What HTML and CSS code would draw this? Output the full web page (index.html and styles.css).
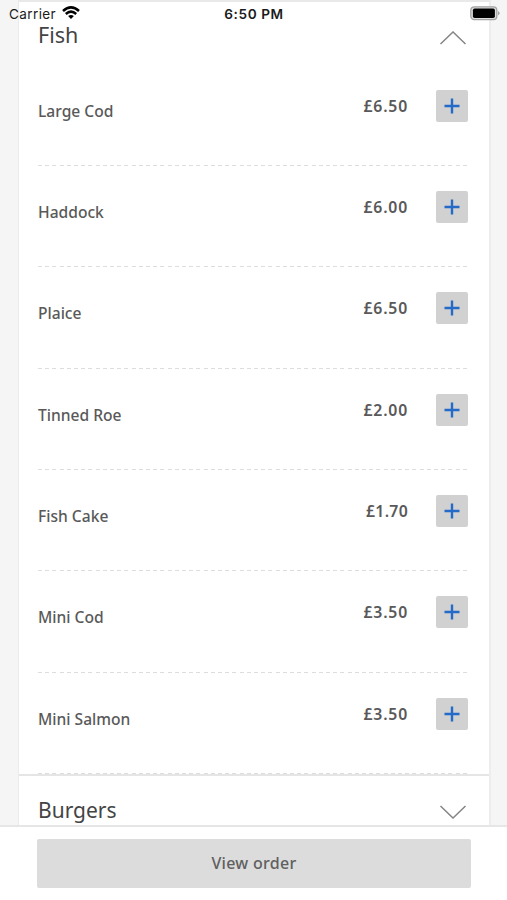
FILE: index.html
```html
<!DOCTYPE html>
<html lang="en">
<head>
<meta charset="utf-8">
<title>Menu</title>
<link rel="stylesheet" href="styles.css">
</head>
<body>
<div class="screen">
  <div class="status">
    <span class="carrier">Carrier</span>
    <svg class="wifi" viewBox="0 0 18 13" width="18" height="13"><g fill="none" stroke="#000" stroke-width="2.5"><path d="M1 5Q9-2.2 17 5"/><path d="M3.8 8Q9 3.3 14.2 8"/></g><path d="M9 13L6.1 10.1Q9 7.8 11.9 10.1Z"/></svg>
    <span class="time">6:50 PM</span>
    <svg class="battery" viewBox="0 0 31 15" width="31" height="15"><rect x=".8" y=".8" width="26" height="12.8" rx="3.4" fill="#ddd" stroke="#a3a3a3" stroke-width="1.3"/><rect x="2.9" y="2.4" width="22" height="9.6" rx="1.8"/><path d="M28 5Q31.2 7.2 28 9.4Z" fill="#a3a3a3"/></svg>
  </div>
  <main class="menu">
    <section class="section">
      <header class="heading fish"><h2>Fish</h2><svg class="chevron" viewBox="0 0 28 14" width="28" height="14"><path d="M1.5 13L14 1L26.5 13"/></svg></header>
      <ul class="items">
        <li class="item"><span class="name">Large Cod</span><span class="price">£6.50</span><button class="add" aria-label="Add"><svg viewBox="0 0 16 16" width="16" height="16"><path d="M8 .5V15.5M.5 8H15.5"/></svg></button></li>
        <li class="item"><span class="name">Haddock</span><span class="price">£6.00</span><button class="add" aria-label="Add"><svg viewBox="0 0 16 16" width="16" height="16"><path d="M8 .5V15.5M.5 8H15.5"/></svg></button></li>
        <li class="item"><span class="name">Plaice</span><span class="price">£6.50</span><button class="add" aria-label="Add"><svg viewBox="0 0 16 16" width="16" height="16"><path d="M8 .5V15.5M.5 8H15.5"/></svg></button></li>
        <li class="item"><span class="name">Tinned Roe</span><span class="price">£2.00</span><button class="add" aria-label="Add"><svg viewBox="0 0 16 16" width="16" height="16"><path d="M8 .5V15.5M.5 8H15.5"/></svg></button></li>
        <li class="item"><span class="name">Fish Cake</span><span class="price narrow">£1.70</span><button class="add" aria-label="Add"><svg viewBox="0 0 16 16" width="16" height="16"><path d="M8 .5V15.5M.5 8H15.5"/></svg></button></li>
        <li class="item"><span class="name">Mini Cod</span><span class="price">£3.50</span><button class="add" aria-label="Add"><svg viewBox="0 0 16 16" width="16" height="16"><path d="M8 .5V15.5M.5 8H15.5"/></svg></button></li>
        <li class="item"><span class="name">Mini Salmon</span><span class="price">£3.50</span><button class="add" aria-label="Add"><svg viewBox="0 0 16 16" width="16" height="16"><path d="M8 .5V15.5M.5 8H15.5"/></svg></button></li>
      </ul>
    </section>
    <section class="section">
      <header class="heading burgers"><h2>Burgers</h2><svg class="chevron" viewBox="0 0 28 14" width="28" height="14"><path d="M1.5 1L14 13L26.5 1"/></svg></header>
    </section>
  </main>
  <footer class="footer"><button class="order">View order</button></footer>
</div>
</body>
</html>
```

FILE: styles.css
```css
* { box-sizing: border-box; }
body { margin: 0; font-family: "Noto Sans", sans-serif; color: #595959; }
.screen { position: relative; display: flex; flex-direction: column; width: 507px; height: 900px; overflow: hidden; background: #f5f5f5; }
.status { position: absolute; z-index: 2; top: 0; left: 0; display: grid; grid-template-columns: 53px 150px 100px 1fr; align-items: center; width: 507px; height: 27px; padding: 0 6px 0 9px; color: #1b1b1b; font-family: Inter, sans-serif; }
.carrier { font-size: 13.5px; letter-spacing: .4px; }
.wifi { margin-top: -2px; }
.time { width: 80px; margin-left: 2px; text-align: center; font-size: 13.6px; font-weight: 600; letter-spacing: .6px; white-space: nowrap; }
.battery { justify-self: end; margin-top: -1px; }
.menu { flex: none; height: 825px; margin: 0 16px 0 18px; overflow: hidden; background: #fff; border-top: 2px solid #e9e9e9; border-left: 1px solid #ebebeb; border-right: 2px solid #ededed; }
.section + .section { border-top: 2px solid #e5e5e5; }
.heading { display: flex; justify-content: space-between; padding: 0 22.5px 0 19px; }
.fish { height: 62.6px; padding-top: 18px; }
.burgers { height: 60px; padding-top: 18px; }
h2 { margin: 0; color: #444; font: 400 21px/30px "Noto Sans", sans-serif; }
.fish h2 { font-size: 21.5px; }
.burgers h2 { margin-top: 1px; }
.chevron { margin-top: 10.5px; fill: none; stroke: #858585; stroke-width: 1.5; }
.items { margin: 0; padding: 0 19px; list-style: none; }
.item { display: grid; grid-template-columns: 1fr 90px 60px; align-items: start; height: 101.38px; padding-top: 25px; background: repeating-linear-gradient(90deg, #ddd 0 4px, transparent 4px 7.2px) bottom / 100% 1px no-repeat; }
.name { padding-top: 9px; font-size: 15.6px; line-height: 24px; font-weight: 500; }
.price { padding-top: 4px; padding-right: 2px; text-align: right; font-size: 15.8px; line-height: 24px; font-weight: 600; letter-spacing: .8px; }
.narrow { letter-spacing: .3px; }
.add { display: grid; place-items: center; justify-self: end; width: 32px; height: 32px; margin-right: 2.5px; padding: 0; border: 0; border-radius: 2px; background: #d1d1d1; }
.add path { fill: none; stroke: #246bc9; stroke-width: 2.4; }
.footer { flex: 1; padding: 12px 36px 12px 37px; background: #fff; border-top: 2px solid #e6e6e6; }
.order { display: block; width: 434px; height: 49px; padding: 0; border: 0; border-radius: 2px; background: #dcdcdc; color: #606060; font: 500 16px/49px "Noto Sans", sans-serif; letter-spacing: .3px; }
```
